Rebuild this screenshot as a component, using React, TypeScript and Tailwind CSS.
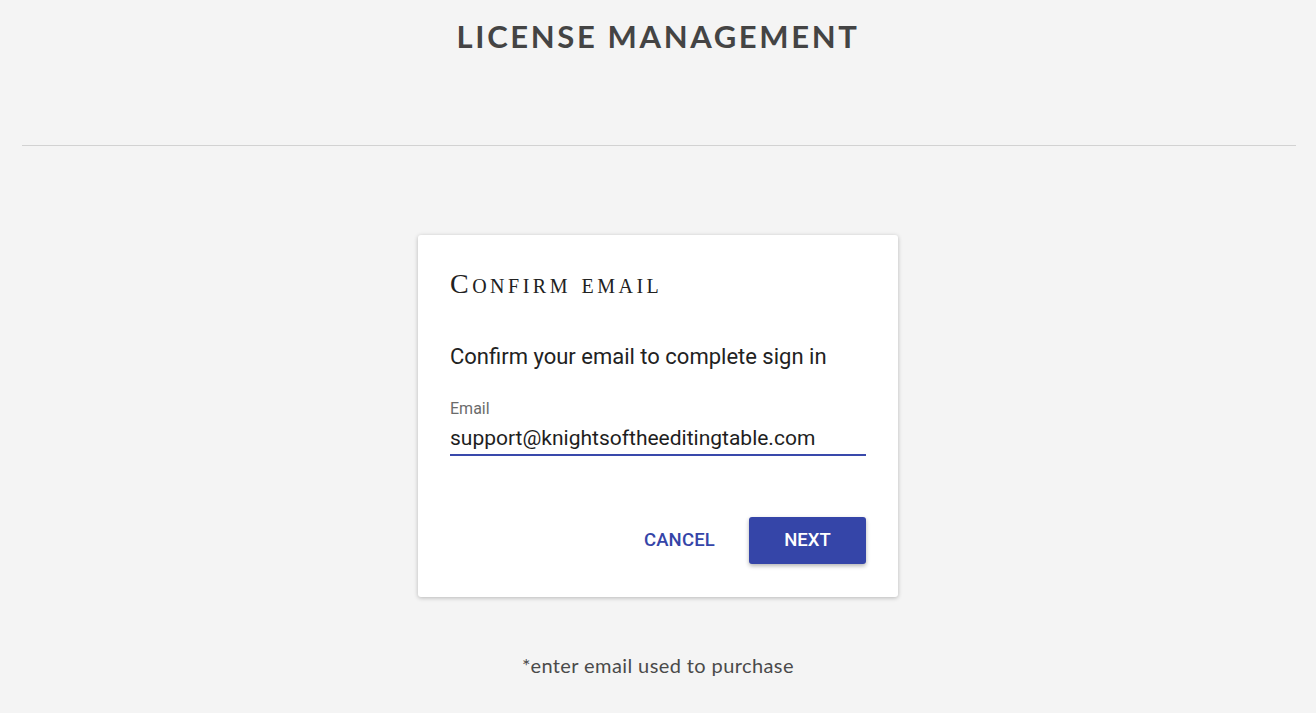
import React, { useState } from "react";

const App: React.FC = () => {
    const [email, setEmail] = useState("support@knightsoftheeditingtable.com");

    return (
        <div className="min-h-[713px] w-full bg-[#f4f4f4] flex flex-col items-center">
            {/* Header */}
            <h1 className="mt-[16px] h-[40px] flex items-center text-[31px] font-bold tracking-[0.085em] text-[#444444] [font-family:Lato,'Open_Sans',sans-serif]">
                LICENSE MANAGEMENT
            </h1>

            <div className="mt-[89px] ml-[2px] w-[1274px] h-px bg-[#d2d2d2]" />

            {/* Card */}
            <div className="mt-[89px] w-[480px] bg-white rounded-[3px] shadow-[0_1px_4px_rgba(0,0,0,0.25)] px-8 pt-[30px] pb-[33px] [font-family:Roboto,sans-serif]">
                <h2 className="text-[28px] leading-[38px] tracking-[3.5px] text-[#222222] [font-variant:small-caps] [font-family:'Liberation_Serif',serif]">
                    Confirm email
                </h2>

                <p className="mt-[41px] text-[22px] leading-[26px] text-[#222222]">
                    Confirm your email to complete sign in
                </p>

                <label htmlFor="email" className="block mt-[30px] text-[16px] leading-[18px] text-[#6b6b6b]">
                    Email
                </label>
                <input
                    id="email"
                    type="email"
                    value={email}
                    onChange={(e) => setEmail(e.target.value)}
                    className="mt-[4px] w-full h-[34px] bg-transparent outline-none text-[21px] text-[#1e1e1e] border-b-2 border-[#3949ab] [font-family:Roboto,sans-serif]"
                />

                {/* Actions */}
                <div className="mt-[61px] flex justify-end items-center gap-[34px]">
                    <button className="text-[18.5px] font-medium text-[#3545a8] tracking-[0.01em]">
                        CANCEL
                    </button>
                    <button className="w-[117px] h-[47px] rounded-[3px] bg-[#3545a8] text-white text-[18.5px] font-medium shadow-[0_2px_4px_rgba(0,0,0,0.3)]">
                        NEXT
                    </button>
                </div>
            </div>

            <p className="mt-[54px] text-[20px] leading-[28px] text-[#4a4a4a] tracking-[0.02em] [font-family:Lato,sans-serif]">
                *enter email used to purchase
            </p>
        </div>
    );
};

export default App;
